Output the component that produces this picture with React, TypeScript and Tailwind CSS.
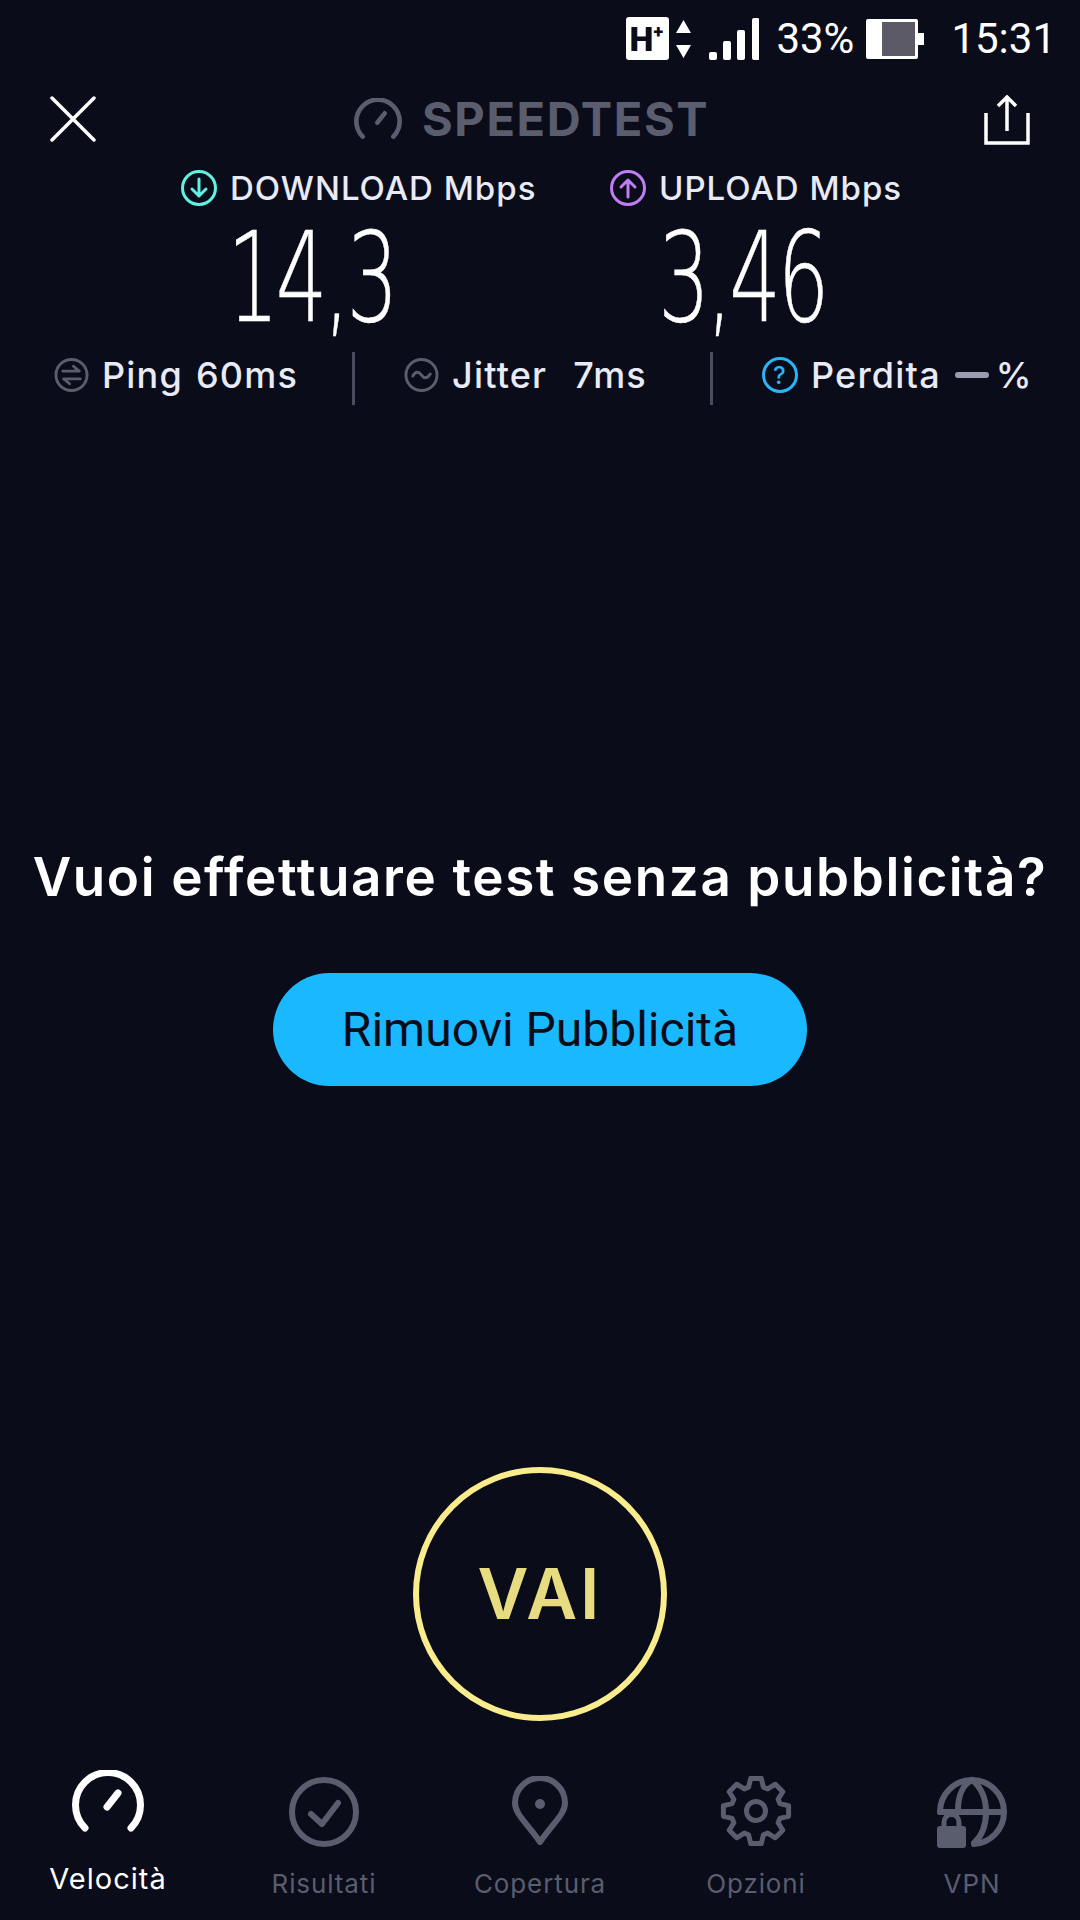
import React from 'react';

const GREY = '#5a5d6e';

const StatusBar = () => (
  <div className="flex h-[76px] items-center justify-end pr-[24px] pt-[1px] font-['Roboto',sans-serif] text-[42px] leading-none text-white">
    <div className="relative h-[43px] w-[43px] rounded-[3px] bg-white">
      <span className="absolute left-[3px] top-[5px] font-['Roboto',sans-serif] text-[34px] font-black leading-none text-[#0a0c1a]">H</span>
      <span className="absolute left-[27px] top-[6px] font-['Roboto',sans-serif] text-[18px] font-black leading-none text-[#0a0c1a]">+</span>
    </div>
    <svg className="ml-[7px]" width="15" height="38" viewBox="0 0 15 38" fill="#fff">
      <path d="M7.5 0 15 13H0zM0 25h15L7.5 38z" />
    </svg>
    <svg className="ml-[18px]" width="50" height="42" viewBox="0 0 50 42" fill="#fff">
      <rect x="0" y="34" width="8" height="8" rx="2" />
      <rect x="14" y="23" width="8" height="19" rx="2" />
      <rect x="28" y="12" width="8" height="30" rx="2" />
      <rect x="43" y="0" width="7.5" height="42" rx="2" />
    </svg>
    <span className="ml-[17px] w-[77px]">33%</span>
    <svg className="ml-[13px]" width="58" height="40" viewBox="0 0 58 40">
      <path fill="#fff" d="M2 0h48a2 2 0 0 1 2 2v12h6v12h-6v12a2 2 0 0 1-2 2H2a2 2 0 0 1-2-2V2a2 2 0 0 1 2-2z" />
      <rect x="16" y="3" width="33" height="34" fill="#5b5a66" />
    </svg>
    <span className="ml-[27px]">15:31</span>
  </div>
);

const Gauge = ({ color, size, sw }: { color: string; size: number; sw: number }) => (
  <svg width={size} height={size * 0.875} viewBox="0 0 72 63" fill="none" stroke={color} strokeWidth={sw} strokeLinecap="round">
    <path d="M13 58A32.5 32.5 0 1 1 59 58" />
    <path d="M35 37 46 23" />
  </svg>
);

const Header = () => (
  <div className="flex h-[84px] items-center pl-[50px] pr-[50px] pt-[1px]">
    <svg width="46" height="46" viewBox="0 0 46 46" fill="none" stroke="#fff" strokeWidth="3.5" strokeLinecap="round">
      <path d="M2 2 44 44M44 2 2 44" />
    </svg>
    <div className="ml-[258px] flex items-center">
      <Gauge color={GREY} size={48} sw={7} />
      <span className="ml-[20px] font-['Inter',sans-serif] text-[47px] font-bold leading-none tracking-[1.6px] text-[#5a5d6e]">SPEEDTEST</span>
    </div>
    <svg className="ml-auto mt-[2px]" width="46" height="50" viewBox="0 0 46 50" fill="none" stroke="#fff" strokeWidth="3.5">
      <path d="M2 18V48H44V18" />
      <path d="M23 36V3M14 11l9-9 9 9" />
    </svg>
  </div>
);

const Metrics = () => (
  <div className="font-['Inter',sans-serif] text-[#e8eaf6]">
    <div className="flex h-[56px] items-center pl-[181px] text-[33px] font-medium leading-none tracking-[1px]">
      <div className="flex w-[429px] items-center gap-[13px]">
        <svg width="36" height="36" viewBox="0 0 36 36" fill="none" stroke="#5ff2e0" strokeWidth="3" strokeLinecap="round" strokeLinejoin="round">
          <circle cx="18" cy="18" r="16.5" />
          <path d="M18 9v17M11 19l7 7 7-7" />
        </svg>
        <span>DOWNLOAD Mbps</span>
      </div>
      <div className="flex items-center gap-[13px]">
        <svg width="36" height="36" viewBox="0 0 36 36" fill="none" stroke="#c07cf2" strokeWidth="3" strokeLinecap="round" strokeLinejoin="round">
          <circle cx="18" cy="18" r="16.5" />
          <path d="M18 27V10M11 17l7-7 7 7" />
        </svg>
        <span>UPLOAD Mbps</span>
      </div>
    </div>
    <div className="flex h-[120px] items-center pl-[96px] pt-[4px] font-['DejaVu_Sans',sans-serif] text-[125px] font-extralight leading-[116px] tracking-[-5px] text-white [-webkit-text-stroke:0.6px_white]">
      <div className="flex w-[431px] justify-center">
        <span className="origin-center scale-x-[0.65]">14,3</span>
      </div>
      <div className="flex w-[431px] justify-center">
        <span className="origin-center scale-x-[0.65]">3,46</span>
      </div>
    </div>
    <div className="mt-[14px] flex h-[56px] items-center text-[36px] font-medium leading-none tracking-[1.2px]">
      <div className="flex w-[352px] items-center pb-[7px] pl-[54px]">
        <svg width="35" height="36" viewBox="0 0 36 36" fill="none" stroke={GREY} strokeWidth="3" strokeLinecap="round" strokeLinejoin="round">
          <circle cx="18" cy="18" r="16" />
          <path d="M9 14h17l-6-5M27 22H10l6 5" />
        </svg>
        <span className="ml-[13px]">Ping</span>
        <span className="ml-[13px]">60ms</span>
      </div>
      <div className="h-[53px] w-[3px] bg-[#4a4d5e]" />
      <div className="flex w-[355px] items-center pb-[7px] pl-[49px]">
        <svg width="35" height="36" viewBox="0 0 36 36" fill="none" stroke={GREY} strokeWidth="3" strokeLinecap="round">
          <circle cx="18" cy="18" r="16" />
          <path d="M9 19c3-5 6-5 9-1s6 4 9-1" />
        </svg>
        <span className="ml-[13px]">Jitter</span>
        <span className="ml-[26px]">7ms</span>
      </div>
      <div className="h-[53px] w-[3px] bg-[#4a4d5e]" />
      <div className="flex items-center pb-[7px] pl-[49px]">
        <svg width="36" height="36" viewBox="0 0 36 36" fill="none">
          <circle cx="18" cy="18" r="16.5" stroke="#29b6f6" strokeWidth="3" />
          <text x="18" y="27" textAnchor="middle" fill="#29b6f6" fontSize="24" fontFamily="Inter, sans-serif" fontWeight="500">?</text>
        </svg>
        <span className="ml-[13px]">Perdita</span>
        <span className="ml-[14px] h-[6px] w-[34px] rounded-full bg-[#9a9db0]" />
        <span className="ml-[7px]">%</span>
      </div>
    </div>
  </div>
);

// 8 teeth, corners rounded by the stroke join
const gearPath = () => {
  const cx = 36;
  const cy = 35;
  const pts: string[] = [];
  for (let i = 0; i < 8; i++) {
    const a = (i * Math.PI) / 4 - Math.PI / 2;
    const w = 0.2;
    const p = (r: number, t: number) => `${(cx + r * Math.cos(t)).toFixed(1)} ${(cy + r * Math.sin(t)).toFixed(1)}`;
    pts.push(p(25, a - 0.3), p(33, a - w + 0.04), p(33, a + w - 0.04), p(25, a + 0.3));
  }
  return 'M' + pts.join('L') + 'Z';
};

const tabs = [
  {
    label: 'Risultati',
    icon: (
      <svg width="72" height="72" viewBox="0 0 72 72" fill="none" stroke={GREY} strokeWidth="6" strokeLinecap="round" strokeLinejoin="round">
        <circle cx="36" cy="36" r="32" />
        <path d="M23 38l11 10 16-21" />
      </svg>
    ),
  },
  {
    label: 'Copertura',
    icon: (
      <svg width="72" height="72" viewBox="0 0 72 72" fill="none" stroke={GREY} strokeWidth="6" strokeLinejoin="round">
        <path d="M36 66C22 46 11 38 11 27a25 25 0 0 1 50 0C61 38 50 46 36 66Z" />
        <circle cx="36" cy="28" r="5" fill={GREY} stroke="none" />
      </svg>
    ),
  },
  {
    label: 'Opzioni',
    icon: (
      <svg width="72" height="72" viewBox="0 0 72 72" fill="none" stroke={GREY} strokeWidth="5" strokeLinejoin="round">
        <path d={gearPath()} />
        <circle cx="36" cy="35" r="9.5" />
      </svg>
    ),
  },
  {
    label: 'VPN',
    icon: (
      <svg width="72" height="72" viewBox="0 0 72 72" fill="none" stroke={GREY} strokeWidth="6" strokeLinecap="round">
        <path d="M4 36A32 32 0 0 1 68 36A32 32 0 0 1 38 68" />
        <path d="M4 36H68" />
        <path d="M22 34C22 18 28 8 36 4C46 12 50 24 50 36C50 50 46 60 38 67" />
        <rect x="1" y="50" width="29" height="22" rx="3" fill={GREY} stroke="none" />
        <path d="M8 50v-4a7.5 7.5 0 0 1 15 0v4" strokeWidth="5" />
      </svg>
    ),
  },
];

const TabBar = () => (
  <div className="grid h-[170px] grid-cols-5 font-['Inter',sans-serif]">
    <div className="flex flex-col items-center pt-[20px]">
      <Gauge color="#fff" size={72} sw={7} />
      <span className="mt-[31px] text-[29px] leading-none tracking-[1px] text-white">Velocità</span>
    </div>
    {tabs.map((t) => (
      <div key={t.label} className="flex flex-col items-center pt-[26px]">
        {t.icon}
        <span className="mt-[23px] text-[26px] leading-none tracking-[0.9px] text-[#5a5d6e]">{t.label}</span>
      </div>
    ))}
  </div>
);

export default function App() {
  return (
    <div className="flex h-[1920px] w-[1080px] flex-col overflow-hidden bg-[#0a0c1a]">
      <StatusBar />
      <Header />
      <Metrics />
      <div className="flex flex-1 flex-col items-center">
        <h1 className="mt-[441px] whitespace-nowrap font-['Inter',sans-serif] text-[53px] font-[560] leading-[60px] tracking-[1.6px] text-white">Vuoi effettuare test senza pubblicità?</h1>
        <button className="mt-[66px] flex h-[113px] w-[534px] items-center justify-center rounded-full bg-[#1ab9ff] font-['Roboto',sans-serif] text-[48px] text-[#0a0c1a]">
          Rimuovi Pubblicità
        </button>
        <div className="mt-[381px] flex h-[254px] w-[254px] items-center justify-center rounded-full border-[6px] border-[#f8ec8c] font-['Inter',sans-serif] text-[70px] font-semibold leading-none tracking-[3px] text-[#e8dc80]">
          VAI
        </div>
      </div>
      <TabBar />
    </div>
  );
}
